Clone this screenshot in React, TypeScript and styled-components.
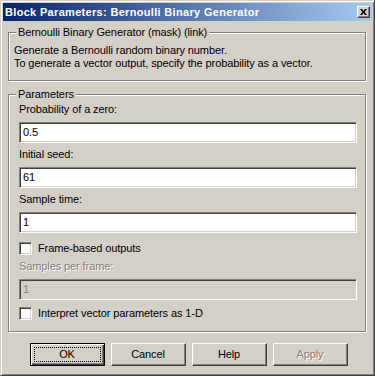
import React from 'react';
import styled, { createGlobalStyle } from 'styled-components';

const FACE = '#d4d0c8';
const SHADOW = '#808080';
const DARK = '#404040';
const FONT = '"Liberation Sans", Arial, sans-serif';

const GlobalStyle = createGlobalStyle`
  html, body {
    margin: 0;
    padding: 0;
    background: ${FACE};
  }
  body {
    font-family: ${FONT};
    font-size: 11px;
    letter-spacing: -0.1px;
    color: #000;
  }
`;

const Window = styled.div`
  box-sizing: border-box;
  width: 375px;
  height: 376px;
  background: ${FACE};
  border: 1px solid;
  border-color: ${FACE} ${DARK} ${DARK} ${FACE};
  box-shadow: inset 1px 1px 0 #fff, inset -1px -1px 0 ${SHADOW};
  padding: 2px;
  display: flex;
  flex-direction: column;
`;

const TitleBar = styled.div`
  height: 18px;
  display: flex;
  align-items: center;
  justify-content: space-between;
  padding: 0 2px 0 2px;
  background: linear-gradient(to right, #0a246a, #a6caf0);
`;

const Title = styled.span`
  color: #fff;
  font-weight: bold;
  font-size: 11px;
  line-height: 13px;
  letter-spacing: 0.32px;
`;

const CloseButton = styled.div`
  box-sizing: border-box;
  width: 13px;
  height: 12px;
  background: ${FACE};
  border: 1px solid;
  border-color: #fff ${DARK} ${DARK} #fff;
  box-shadow: inset -1px -1px 0 ${SHADOW};
  display: flex;
  align-items: center;
  justify-content: center;
`;

const Body = styled.div`
  flex: 1;
  display: flex;
  flex-direction: column;
  padding: 11px 6px 0 5px;
`;

const Group = styled.div<{ $height: number; $padTop: number; $padLeft: number }>`
  position: relative;
  box-sizing: border-box;
  height: ${({ $height }) => $height}px;
  border: 1px solid ${SHADOW};
  box-shadow: inset 1px 1px 0 #fff, 1px 1px 0 #fff;
  padding: ${({ $padTop, $padLeft }) => `${$padTop}px 8px 0 ${$padLeft}px`};
  display: flex;
  flex-direction: column;
`;

const Legend = styled.span`
  position: absolute;
  top: -7px;
  left: 7px;
  padding: 0 2px 0 2px;
  background: ${FACE};
  line-height: 13px;
`;

const Text = styled.div`
  line-height: 13px;
  white-space: nowrap;
`;

const Label = styled.div<{ $disabled?: boolean; $gap?: number }>`
  line-height: 13px;
  margin-top: ${({ $gap }) => $gap ?? 0}px;
  margin-bottom: 6px;
  color: ${({ $disabled }) => ($disabled ? SHADOW : '#000')};
  text-shadow: ${({ $disabled }) => ($disabled ? '1px 1px 0 #fff' : 'none')};
`;

const Input = styled.div<{ $disabled?: boolean }>`
  box-sizing: border-box;
  height: 21px;
  border: 1px solid;
  border-color: ${SHADOW} #fff #fff ${SHADOW};
  box-shadow: inset 1px 1px 0 ${DARK}, inset -1px -1px 0 ${FACE};
  background: ${({ $disabled }) => ($disabled ? FACE : '#fff')};
  color: ${({ $disabled }) => ($disabled ? SHADOW : '#000')};
  padding: 3px 3px 0 3px;
  line-height: 13px;
`;

const CheckRow = styled.div<{ $gap: number }>`
  display: flex;
  align-items: center;
  gap: 6px;
  height: 13px;
  margin-top: ${({ $gap }) => $gap}px;
  line-height: 13px;
`;

const CheckBox = styled.span`
  box-sizing: border-box;
  width: 13px;
  height: 13px;
  border: 1px solid;
  border-color: ${SHADOW} #fff #fff ${SHADOW};
  box-shadow: inset 1px 1px 0 ${DARK}, inset -1px -1px 0 ${FACE};
  background: #fff;
`;

const ButtonRow = styled.div`
  display: flex;
  justify-content: center;
  gap: 6px;
  margin-top: 11px;
  padding-left: 3px;
`;

const Button = styled.div<{ $default?: boolean; $disabled?: boolean }>`
  position: relative;
  box-sizing: border-box;
  width: 75px;
  height: 23px;
  display: flex;
  align-items: center;
  justify-content: center;
  background: ${FACE};
  border: 1px solid;
  border-color: ${({ $default }) => ($default ? '#000' : `#fff ${DARK} ${DARK} #fff`)};
  box-shadow: ${({ $default }) =>
    $default
      ? `inset 1px 1px 0 #fff, inset -1px -1px 0 ${DARK}, inset -2px -2px 0 ${SHADOW}`
      : `inset -1px -1px 0 ${SHADOW}`};
  color: ${({ $disabled }) => ($disabled ? SHADOW : '#000')};
  text-shadow: ${({ $disabled }) => ($disabled ? '1px 1px 0 #fff' : 'none')};
  line-height: 13px;
`;

const FocusRing = styled.span`
  position: absolute;
  inset: 3px;
  border: 1px dotted #000;
`;

const Field = ({ label, value, gap }: { label: string; value: string; gap?: number }) => (
  <>
    <Label $gap={gap}>{label}</Label>
    <Input>{value}</Input>
  </>
);

export default function App() {
  return (
    <>
      <GlobalStyle />
      <Window>
        <TitleBar>
          <Title>Block Parameters: Bernoulli Binary Generator</Title>
          <CloseButton>
            <svg width="7" height="6" viewBox="0 0 7 6">
              <path d="M0 0h2l1.5 2 1.5-2h2L4.5 3 7 6H5L3.5 4 2 6H0l2.5-3z" fill="#000" />
            </svg>
          </CloseButton>
        </TitleBar>
        <Body>
          <Group $height={49} $padTop={11} $padLeft={5}>
            <Legend>Bernoulli Binary Generator (mask) (link)</Legend>
            <Text>Generate a Bernoulli random binary number.</Text>
            <Text>To generate a vector output, specify the probability as a vector.</Text>
          </Group>
          <div style={{ height: 13 }} />
          <Group $height={238} $padTop={8} $padLeft={10}>
            <Legend>Parameters</Legend>
            <Field label="Probability of a zero:" value="0.5" />
            <Field label="Initial seed:" value="61" gap={5} />
            <Field label="Sample time:" value="1" gap={5} />
            <CheckRow $gap={9}>
              <CheckBox />
              Frame-based outputs
            </CheckRow>
            <Label $disabled $gap={5}>
              Samples per frame:
            </Label>
            <Input $disabled>1</Input>
            <CheckRow $gap={7}>
              <CheckBox />
              Interpret vector parameters as 1-D
            </CheckRow>
          </Group>
          <ButtonRow>
            <Button $default>
              <FocusRing />
              OK
            </Button>
            <Button>Cancel</Button>
            <Button>Help</Button>
            <Button $disabled>Apply</Button>
          </ButtonRow>
        </Body>
      </Window>
    </>
  );
}
